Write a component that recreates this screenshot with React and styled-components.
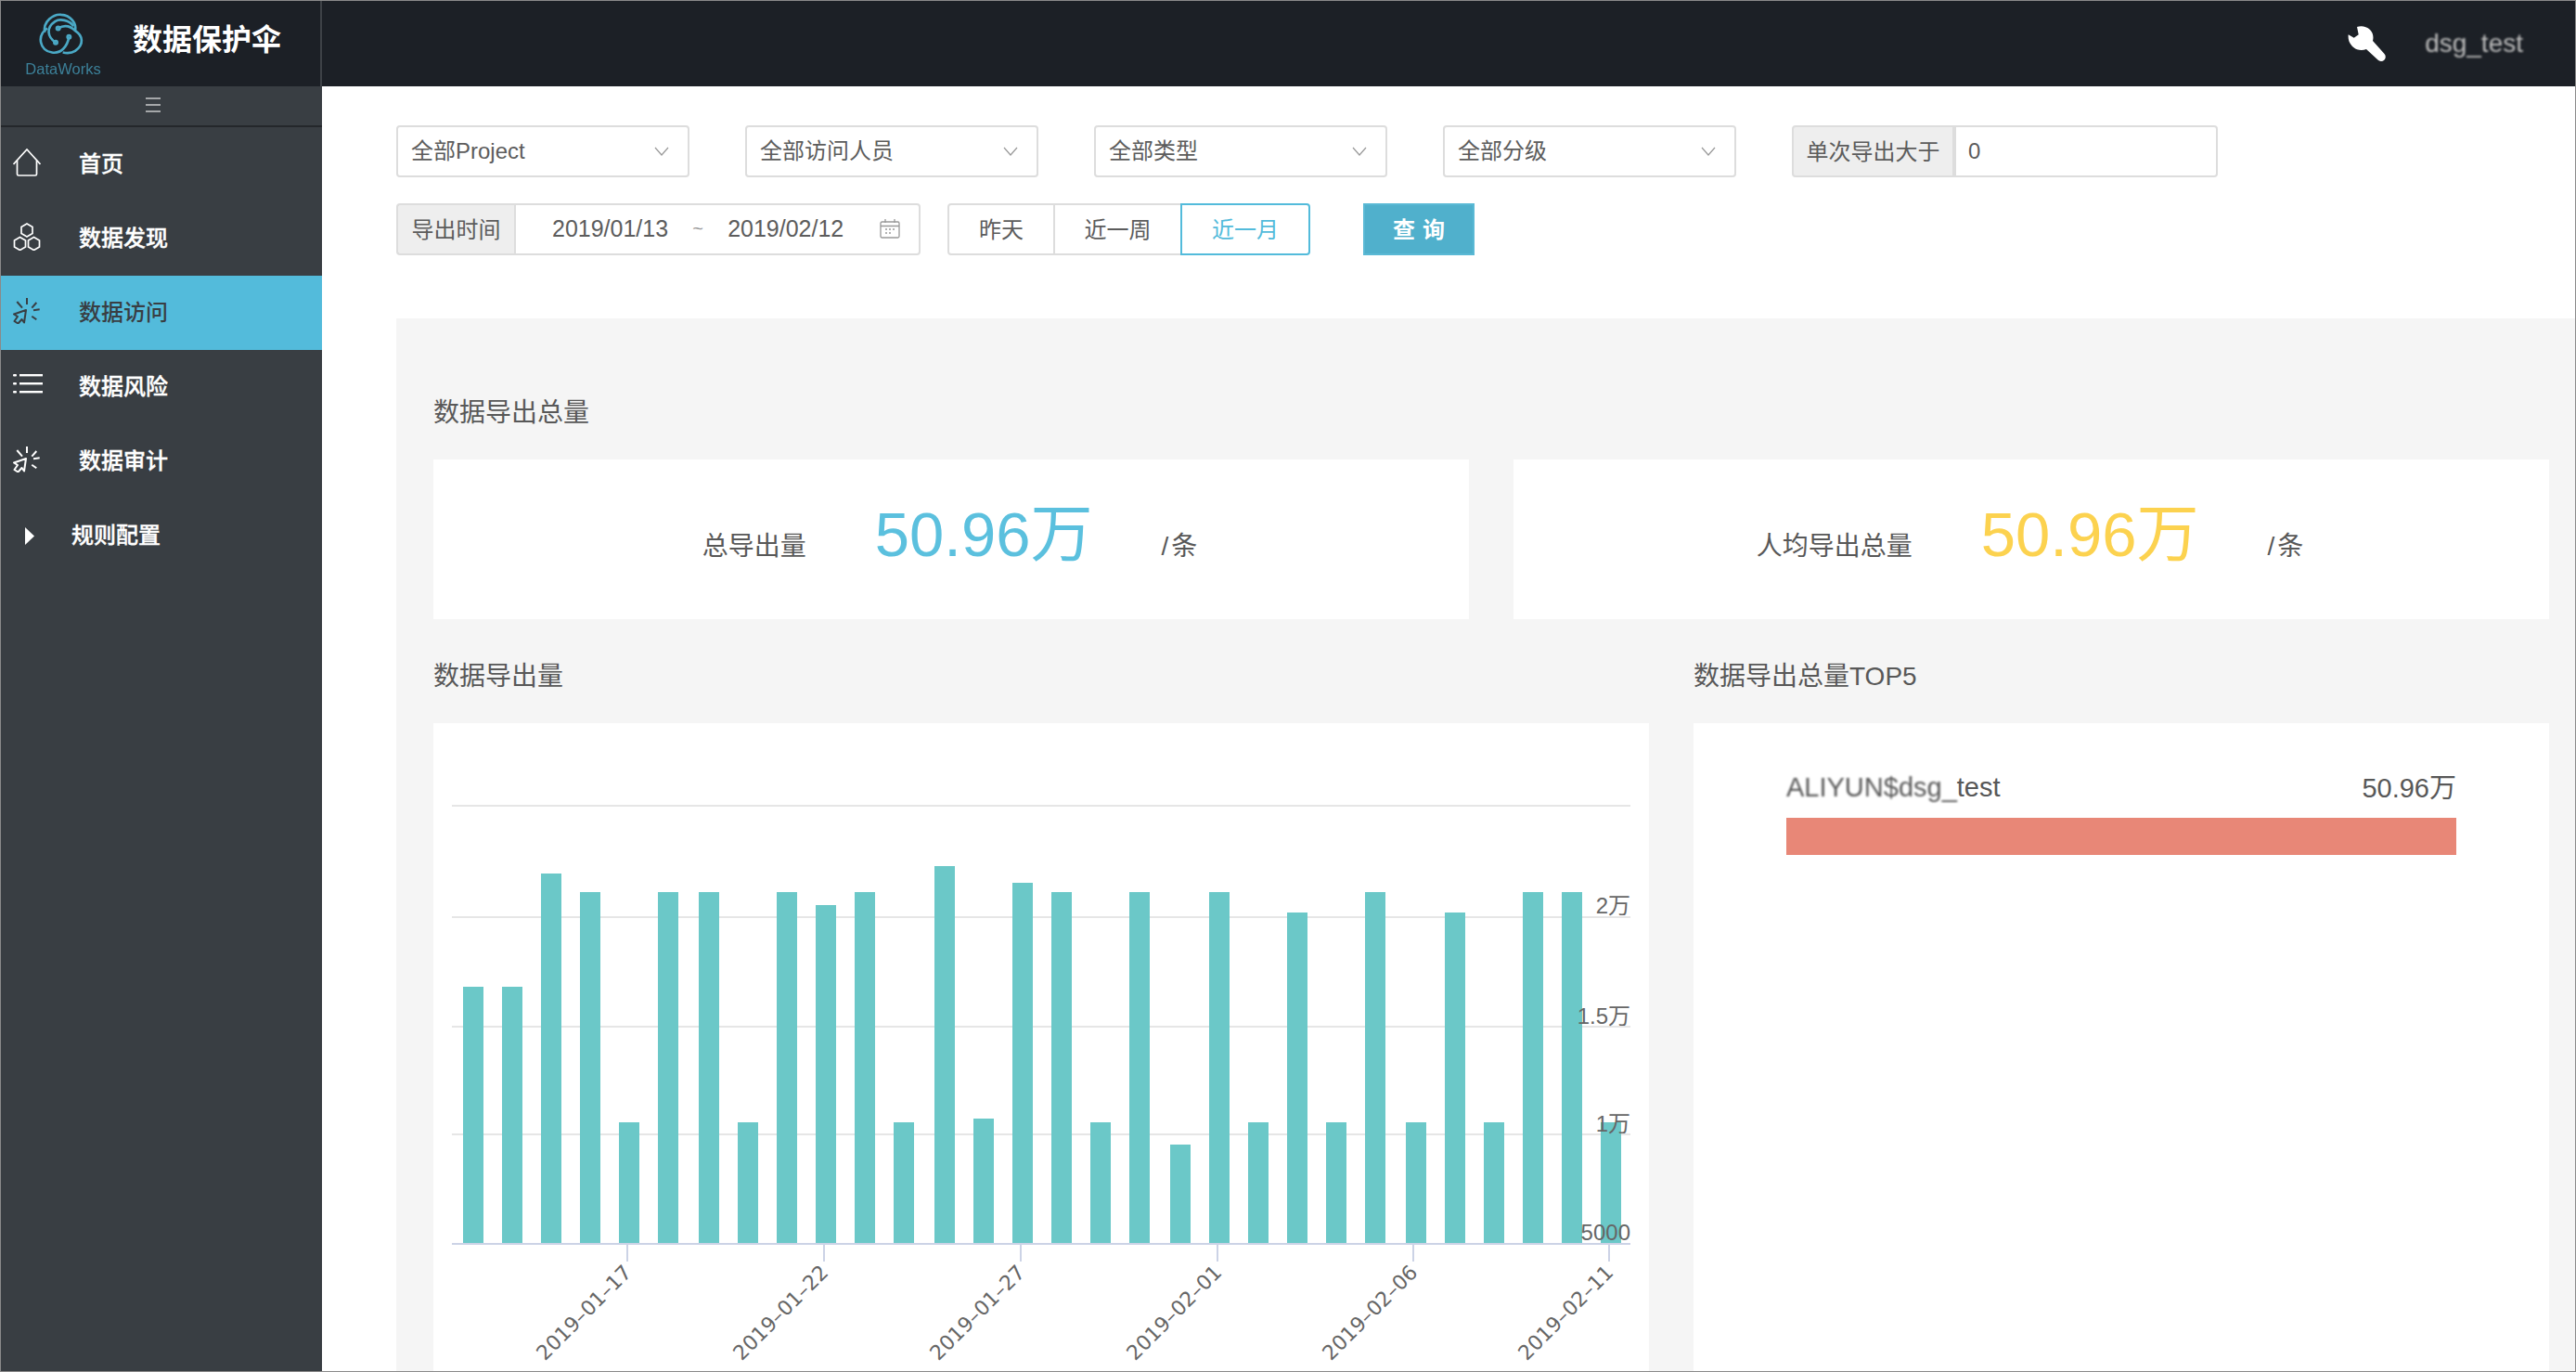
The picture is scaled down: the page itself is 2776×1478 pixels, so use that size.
import React from 'react';
import styled, { createGlobalStyle } from 'styled-components';

const barTops = [
    1063, 1063, 941, 961, 1209, 961, 961, 1209, 961, 975, 961, 1209, 933, 1205, 951,
    961, 1209, 961, 1233, 961, 1209, 983, 1209, 961, 1209, 983, 1209, 961, 961, 1209,
];
const barLefts = [
    499, 541, 583, 625, 667, 709, 753, 795, 837, 879, 921, 963, 1007, 1049, 1091,
    1133, 1175, 1217, 1261, 1303, 1345, 1387, 1429, 1471, 1515, 1557, 1599, 1641, 1683, 1725,
];
const gridLines = [868, 988, 1106, 1222];
const ticks = [
    { x: 676, label: '2019–01–17' },
    { x: 888, label: '2019–01–22' },
    { x: 1100, label: '2019–01–27' },
    { x: 1312, label: '2019–02–01' },
    { x: 1523, label: '2019–02–06' },
    { x: 1734, label: '2019–02–11' },
];
const yLabels = [
    { y: 984, label: '2万' },
    { y: 1103, label: '1.5万' },
    { y: 1219, label: '1万' },
    { y: 1336, label: '5000' },
];

const HomeIcon = () => (
    <svg width="30" height="30" viewBox="0 0 30 30" fill="none" stroke="currentColor" strokeWidth="1.7">
        <path d="M0.5 17L15 1l14.5 16" />
        <path d="M4.5 13v14.5a1.5 1.5 0 0 0 1.5 1.5h18a1.5 1.5 0 0 0 1.5-1.5V13" />
    </svg>
);

const HexIcon = () => (
    <svg width="30" height="30" viewBox="0 0 30 30" fill="none" stroke="currentColor" strokeWidth="1.7">
        <path d="M15 1l6 3.5v7l-6 3.5-6-3.5v-7z" />
        <path d="M7.5 15.5l6 3.5v7l-6 3.5-6-3.5v-7z" />
        <path d="M22.5 15.5l6 3.5v7l-6 3.5-6-3.5v-7z" />
    </svg>
);

const ClickIcon = () => (
    <svg width="30" height="28" viewBox="0 0 30 28" fill="none" stroke="currentColor" strokeWidth="2">
        <path d="M15 0v7M20.3 10.7L25.3 5M22 13.3l6.7-1M20.3 19.7l5 3.6M4.3 4L10 10.7" />
        <path d="M14 13L1 17.5l4 2.5-3.5 5 4 2.5 4-4.5 2.5 3.5z" strokeLinejoin="round" />
    </svg>
);

const ListIcon = () => (
    <svg width="32" height="22" viewBox="0 0 32 22" fill="currentColor">
        <rect x="0" y="0" width="4" height="2.4" rx="1" />
        <rect x="0" y="9" width="4" height="2.4" rx="1" />
        <rect x="0" y="18" width="4" height="2.4" rx="1" />
        <rect x="7" y="0" width="25" height="2.4" />
        <rect x="7" y="9" width="25" height="2.4" />
        <rect x="7" y="18" width="25" height="2.4" />
    </svg>
);

const TriangleIcon = () => (
    <svg width="10" height="19" viewBox="0 0 10 19" fill="currentColor">
        <path d="M0 0l10 9.5L0 19z" />
    </svg>
);

const WrenchIcon = () => (
    <svg width="41" height="39" viewBox="0 0 41 39" fill="#fff">
        <path d="M10 1C14-.5 20 0 24 4c3.5 3.5 4 8 3 12l12.500 14a4.600 4.600 0 0 1-7 6.500L20 25c-5 2-11 1-15-3C1 18 .2 13 .7 9.300l6 3.400 5-3.400z" />
    </svg>
);

const LogoMark = () => (
    <svg width="50" height="48" viewBox="30 20 150 143" fill="none" stroke="#4aa9c6" strokeWidth="8">
        <path d="M60 72C25 95 35 145 75 150c30 5 50-20 55-50" />
        <path d="M87 118C60 100 55 70 85 50c15-10 45-5 60 15" />
        <path d="M95 72c20-12 40-7 55 8 25 15 30 45 0 65-15 10-40 5-40 5" />
        <path d="M52 85C45 50 80 25 105 28c30 2 50 27 45 52" />
        <circle cx="95" cy="72" r="5" />
        <circle cx="87" cy="118" r="5" />
        <circle cx="130" cy="100" r="5" />
    </svg>
);

const CalendarIcon = () => (
    <svg width="22" height="21" viewBox="0 0 22 21" fill="none" stroke="#999" strokeWidth="1.300">
        <rect x="1" y="3" width="20" height="17" rx="1.500" />
        <path d="M1 7.500h20M6 0v4M16 0v4" />
        <path d="M6 11h2M10 11h2M14 11h2M6 15h2M10 15h2" strokeWidth="1.600" />
    </svg>
);

const GlobalStyle = createGlobalStyle`
    html, body {
        margin: 0;
        padding: 0;
        background: #fff;
    }
    * {
        box-sizing: border-box;
    }
    body {
        font-family: "Liberation Sans", "Noto Sans CJK SC", sans-serif;
        color: #555;
    }
`;

const Page = styled.div`
    width: 2776px;
    height: 1478px;
    border: 1px solid #8a8a8a;
    display: flex;
    flex-direction: column;
    overflow: hidden;
`;

const TopBar = styled.header`
    height: 92px;
    flex: none;
    background: #1c2026;
    display: flex;
    align-items: center;
`;

const Brand = styled.div`
    width: 346px;
    height: 100%;
    border-right: 2px solid #3e4247;
    display: flex;
    align-items: flex-start;
`;

const LogoBox = styled.div`
    width: 142px;
    padding: 12px 19px 0 7px;
    display: flex;
    flex-direction: column;
    align-items: center;
`;

const LogoText = styled.div`
    font-size: 16.5px;
    line-height: 19px;
    margin-top: 4px;
    margin-left: 4px;
    color: #3c8099;
    filter: blur(0.6px);
`;

const BrandTitle = styled.div`
    font-size: 32px;
    font-weight: 700;
    color: #fff;
    line-height: 84px;
`;

const TopActions = styled.div`
    margin-left: auto;
    display: flex;
    align-items: center;
    gap: 42px;
    padding-right: 56px;
`;

const UserName = styled.span`
    font-size: 28px;
    color: #bdbdbd;
    filter: blur(1px);
`;

const Body = styled.div`
    flex: 1;
    display: flex;
    min-height: 0;
`;

const Sidebar = styled.nav`
    width: 346px;
    flex: none;
    background: #393e43;
`;

const Collapse = styled.div`
    height: 44px;
    border-bottom: 2px solid #24272b;
    display: flex;
    flex-direction: column;
    align-items: center;
    justify-content: center;
    gap: 5px;
    padding: 0 19px 2px 0;
    i {
        display: block;
        width: 16px;
        height: 2px;
        background: #a5a7a9;
    }
`;

const NavItem = styled.div`
    height: 80px;
    display: flex;
    align-items: center;
    background: ${(p) => (p.$active ? '#53bbdb' : 'transparent')};
    color: ${(p) => (p.$active ? '#393e43' : '#fff')};
    -webkit-text-stroke: ${(p) => (p.$active ? '0' : '0.35px')};
`;

const NavIcon = styled.span`
    width: 84px;
    padding-left: 13px;
    display: flex;
    flex: none;
    transform: translateY(${(p) => p.$shift || -2}px);
`;

const NavArrow = styled.span`
    width: 76px;
    padding-left: 26px;
    display: flex;
    flex: none;
`;

const NavLabel = styled.span`
    font-size: 24px;
    font-weight: 500;
    padding-bottom: 5px;
`;

const Main = styled.main`
    flex: 1;
    min-width: 0;
    display: flex;
    flex-direction: column;
    background: #fff;
`;

const Filters = styled.div`
    padding: 42px 0 68px 80px;
    display: flex;
    flex-direction: column;
    gap: 28px;
`;

const FilterRow = styled.div`
    display: flex;
    align-items: center;
`;

const Select = styled.div`
    width: 316px;
    height: 56px;
    margin-right: 60px;
    border: 2px solid #ddd;
    border-radius: 4px;
    background: #fff;
    display: flex;
    align-items: center;
    justify-content: space-between;
    padding: 0 20px 5px 14px;
    font-size: 24px;
    color: #5c5c5c;
    svg {
        margin-top: 4px;
    }
`;

const Addon = styled.div`
    height: 56px;
    width: ${(p) => p.$width}px;
    flex: none;
    background: #eee;
    border: 2px solid #ddd;
    border-radius: 4px 0 0 4px;
    border-right: ${(p) => (p.$joined ? '2px solid #ddd' : '0')};
    display: flex;
    align-items: center;
    justify-content: center;
    padding-bottom: 3px;
    font-size: 24px;
    color: #5c5c5c;
`;

const NumberInput = styled.div`
    width: 284px;
    height: 56px;
    border: 2px solid #ddd;
    border-radius: 0 4px 4px 0;
    padding-left: 13px;
    display: flex;
    align-items: center;
    font-size: 24px;
    color: #5c5c5c;
`;

const DateRange = styled.div`
    width: 438px;
    height: 56px;
    border: 2px solid #ddd;
    border-radius: 0 4px 4px 0;
    margin-right: 29px;
    display: flex;
    align-items: center;
    padding-left: 39px;
    padding-bottom: 2px;
    font-size: 25px;
    color: #5c5c5c;
`;

const DateSep = styled.span`
    width: 64px;
    text-align: center;
    font-size: 20px;
    color: #999;
`;

const CalendarSlot = styled.span`
    margin-left: auto;
    margin-right: 20px;
    display: flex;
`;

const PeriodGroup = styled.div`
    display: flex;
    margin-right: 57px;
`;

const PeriodButton = styled.div`
    height: 56px;
    width: ${(p) => p.$width}px;
    margin-left: ${(p) => (p.$first ? 0 : -2)}px;
    border: 2px solid ${(p) => (p.$active ? '#53bbdb' : '#ddd')};
    border-radius: ${(p) => p.$radius || '0'};
    position: relative;
    z-index: ${(p) => (p.$active ? 1 : 0)};
    display: flex;
    align-items: center;
    justify-content: center;
    padding-bottom: 3px;
    font-size: 24px;
    color: ${(p) => (p.$active ? '#53bbdb' : '#5c5c5c')};
`;

const QueryButton = styled.div`
    width: 120px;
    height: 56px;
    background: #50b0cc;
    border: 2px solid #5ab9d5;
    display: flex;
    align-items: center;
    justify-content: center;
    gap: 8px;
    padding-bottom: 3px;
    font-size: 24px;
    font-weight: 700;
    color: #fff;
`;

const Panel = styled.section`
    flex: 1;
    min-height: 0;
    margin-left: 80px;
    padding: 80px 28px 0 40px;
    background: #f5f5f5;
    display: flex;
    flex-direction: column;
`;

const SectionTitle = styled.div`
    height: 40px;
    padding-top: 2px;
    font-size: 28px;
    line-height: 40px;
    color: #585858;
`;

const StatRow = styled.div`
    margin-top: 32px;
    display: grid;
    grid-template-columns: 1fr 1fr;
    gap: 48px;
`;

const StatCard = styled.div`
    height: 172px;
    background: #fff;
    display: flex;
    align-items: center;
    justify-content: center;
`;

const StatLabel = styled.span`
    font-size: 28px;
    color: #585858;
    line-height: 40px;
    padding-top: 16px;
    letter-spacing: ${(p) => p.$spacing || 0}px;
`;

const StatValue = styled.span`
    font-size: 67px;
    line-height: 76px;
    margin: 0 74px 10px;
    color: ${(p) => p.$color};
`;

const ChartGrid = styled.div`
    flex: 1;
    min-height: 0;
    margin-top: 40px;
    display: grid;
    grid-template-columns: 1310px 922px;
    gap: 0 48px;
    grid-template-rows: 40px 1fr;
`;

const Card = styled.div`
    margin-top: 32px;
    background: #fff;
    min-height: 0;
    overflow: hidden;
`;

const TopCard = styled(Card)`
    padding: 47px 100px 0;
`;

const TopRow = styled.div`
    display: flex;
    justify-content: space-between;
    align-items: center;
    height: 44px;
    font-size: 29px;
    color: #585858;
`;

const Blurred = styled.span`
    filter: blur(0.8px);
`;

const TopValue = styled.span`
    padding-bottom: 4px;
`;

const TopBarFill = styled.div`
    height: 40px;
    margin-top: 11px;
    background: #e88777;
`;

const ChartSvg = styled.svg`
    display: block;
    width: 1310px;
    height: 698px;
`;

const AxisText = styled.text`
    font-family: "DejaVu Sans", "Noto Sans CJK SC", sans-serif;
    font-size: 22px;
    fill: #666;
`;

const YText = styled.text`
    font-family: "Liberation Sans", "Noto Sans CJK SC", sans-serif;
    font-size: 24px;
    fill: #666;
`;

const BarChart = () => (
    <ChartSvg viewBox="467 779 1310 698">
        {gridLines.map((y) => (
            <rect key={y} x="487" y={y - 1} width="1270" height="2" fill="#e6e6e6" />
        ))}
        {barLefts.map((x, i) => (
            <rect key={x} x={x} y={barTops[i]} width="22" height={1339 - barTops[i]} fill="#6bc8c8" />
        ))}
        <rect x="487" y="1339" width="1270" height="2" fill="#ccd3e6" />
        {ticks.map((t) => (
            <g key={t.label}>
                <rect x={t.x - 1} y="1340" width="2" height="19" fill="#ccd3e6" />
                <AxisText x={t.x + 6} y="1372" textAnchor="end" transform={`rotate(-45 ${t.x + 6} 1372)`}>
                    {t.label}
                </AxisText>
            </g>
        ))}
        {yLabels.map((l) => (
            <YText key={l.label} x="1757" y={l.y} textAnchor="end">
                {l.label}
            </YText>
        ))}
    </ChartSvg>
);

const selectNames = ['全部Project', '全部访问人员', '全部类型', '全部分级'];

const Chevron = () => (
    <svg width="16" height="10" viewBox="0 0 16 10" fill="none" stroke="#999" strokeWidth="1.200">
        <path d="M1 1l7 8 7-8" />
    </svg>
);

export default function App() {
    return (
        <>
            <GlobalStyle />
            <Page>
                <TopBar>
                    <Brand>
                        <LogoBox>
                            <LogoMark />
                            <LogoText>DataWorks</LogoText>
                        </LogoBox>
                        <BrandTitle>数据保护伞</BrandTitle>
                    </Brand>
                    <TopActions>
                        <WrenchIcon />
                        <UserName>dsg_test</UserName>
                    </TopActions>
                </TopBar>
                <Body>
                    <Sidebar>
                        <Collapse>
                            <i />
                            <i />
                            <i />
                        </Collapse>
                        <NavItem>
                            <NavIcon>
                                <HomeIcon />
                            </NavIcon>
                            <NavLabel>首页</NavLabel>
                        </NavItem>
                        <NavItem>
                            <NavIcon>
                                <HexIcon />
                            </NavIcon>
                            <NavLabel>数据发现</NavLabel>
                        </NavItem>
                        <NavItem $active>
                            <NavIcon>
                                <ClickIcon />
                            </NavIcon>
                            <NavLabel>数据访问</NavLabel>
                        </NavItem>
                        <NavItem>
                            <NavIcon $shift={-3}>
                                <ListIcon />
                            </NavIcon>
                            <NavLabel>数据风险</NavLabel>
                        </NavItem>
                        <NavItem>
                            <NavIcon>
                                <ClickIcon />
                            </NavIcon>
                            <NavLabel>数据审计</NavLabel>
                        </NavItem>
                        <NavItem>
                            <NavArrow>
                                <TriangleIcon />
                            </NavArrow>
                            <NavLabel>规则配置</NavLabel>
                        </NavItem>
                    </Sidebar>
                    <Main>
                        <Filters>
                            <FilterRow>
                                {selectNames.map((name) => (
                                    <Select key={name}>
                                        {name}
                                        <Chevron />
                                    </Select>
                                ))}
                                <Addon $width={175} $joined>
                                    单次导出大于
                                </Addon>
                                <NumberInput>0</NumberInput>
                            </FilterRow>
                            <FilterRow>
                                <Addon $width={127}>导出时间</Addon>
                                <DateRange>
                                    2019/01/13
                                    <DateSep>~</DateSep>
                                    2019/02/12
                                    <CalendarSlot>
                                        <CalendarIcon />
                                    </CalendarSlot>
                                </DateRange>
                                <PeriodGroup>
                                    <PeriodButton $first $width={116} $radius="4px 0 0 4px">
                                        昨天
                                    </PeriodButton>
                                    <PeriodButton $width={139}>近一周</PeriodButton>
                                    <PeriodButton $active $width={140} $radius="0 4px 4px 0">
                                        近一月
                                    </PeriodButton>
                                </PeriodGroup>
                                <QueryButton>
                                    <span>查</span>
                                    <span>询</span>
                                </QueryButton>
                            </FilterRow>
                        </Filters>
                        <Panel>
                            <SectionTitle>数据导出总量</SectionTitle>
                            <StatRow>
                                <StatCard>
                                    <StatLabel>总导出量</StatLabel>
                                    <StatValue $color="#5bc0de">50.96万</StatValue>
                                    <StatLabel $spacing={3}>/条</StatLabel>
                                </StatCard>
                                <StatCard>
                                    <StatLabel>人均导出总量</StatLabel>
                                    <StatValue $color="#fcd24f">50.96万</StatValue>
                                    <StatLabel $spacing={3}>/条</StatLabel>
                                </StatCard>
                            </StatRow>
                            <ChartGrid>
                                <SectionTitle>数据导出量</SectionTitle>
                                <SectionTitle>数据导出总量TOP5</SectionTitle>
                                <Card>
                                    <BarChart />
                                </Card>
                                <TopCard>
                                    <TopRow>
                                        <span>
                                            <Blurred>ALIYUN$dsg_</Blurred>test
                                        </span>
                                        <TopValue>50.96万</TopValue>
                                    </TopRow>
                                    <TopBarFill />
                                </TopCard>
                            </ChartGrid>
                        </Panel>
                    </Main>
                </Body>
            </Page>
        </>
    );
}
